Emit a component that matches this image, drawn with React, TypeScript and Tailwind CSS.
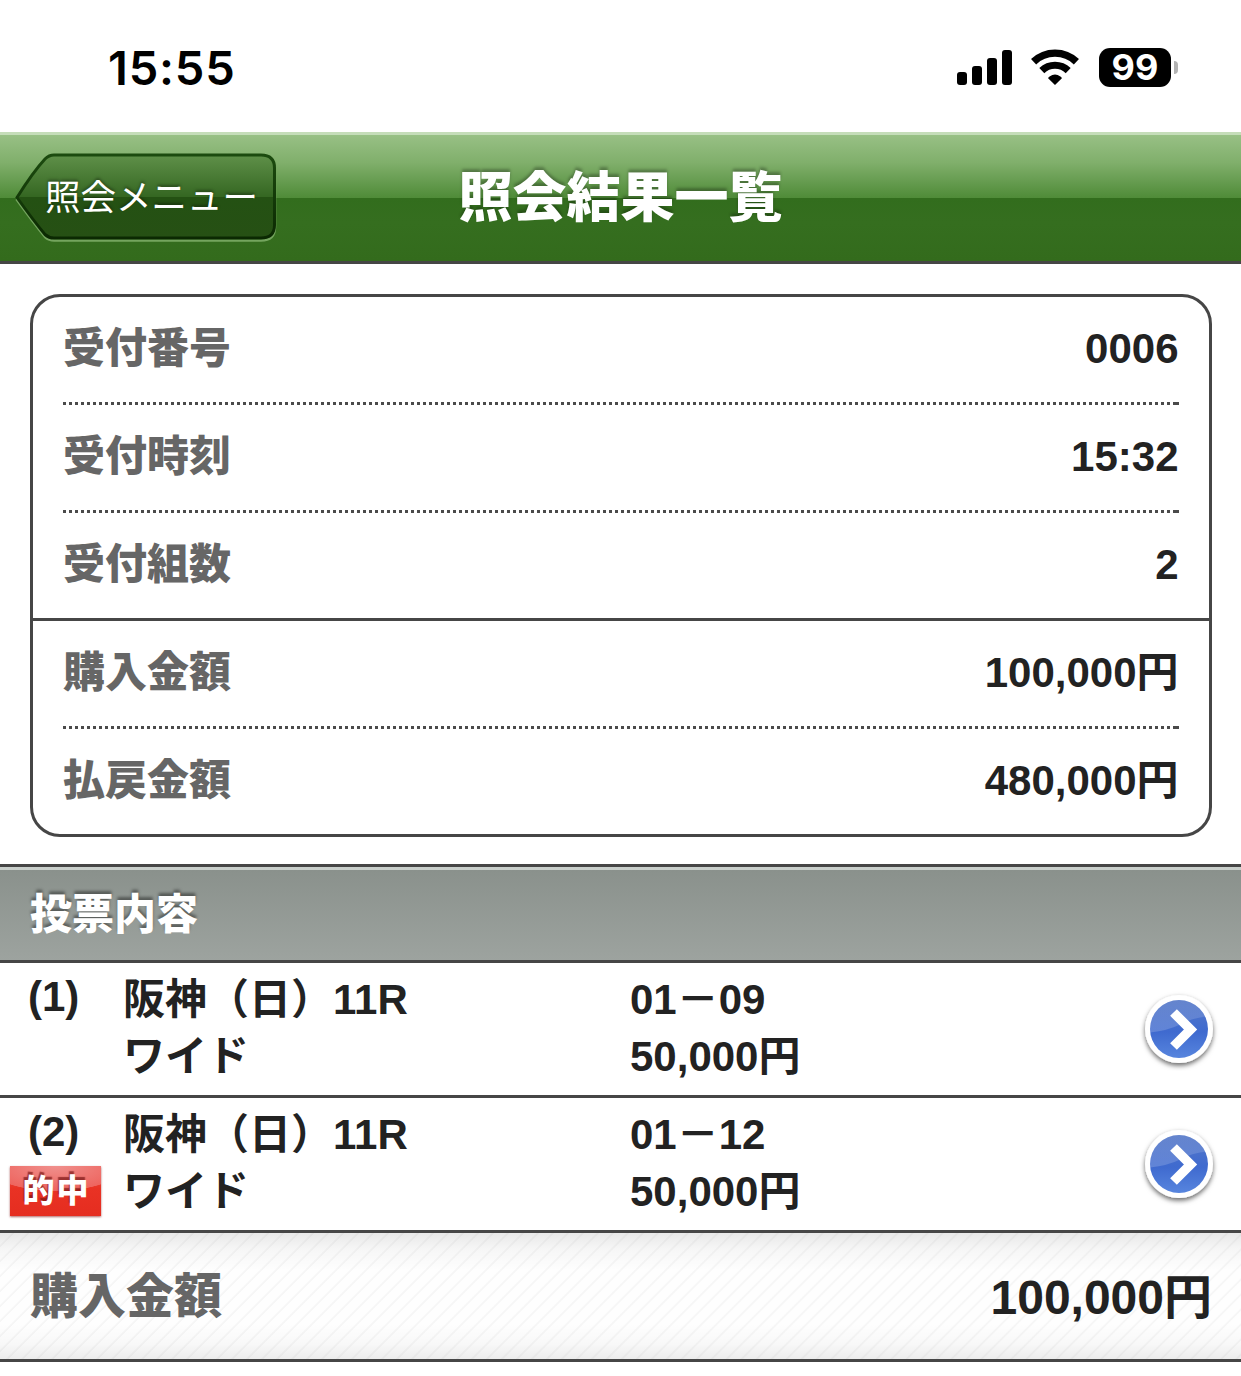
import React from 'react';

interface SummaryItem {
  label: string;
  value: string;
  divider: 'dotted' | 'solid' | 'none';
}

interface Bet {
  no: number;
  race: string;
  type: string;
  numbers: string;
  amount: string;
  hit: boolean;
}

const SUMMARY: SummaryItem[] = [
  { label: '受付番号', value: '0006', divider: 'dotted' },
  { label: '受付時刻', value: '15:32', divider: 'dotted' },
  { label: '受付組数', value: '2', divider: 'solid' },
  { label: '購入金額', value: '100,000円', divider: 'dotted' },
  { label: '払戻金額', value: '480,000円', divider: 'none' },
];

const BETS: Bet[] = [
  { no: 1, race: '阪神（日）11R', type: 'ワイド', numbers: '01－09', amount: '50,000円', hit: false },
  { no: 2, race: '阪神（日）11R', type: 'ワイド', numbers: '01－12', amount: '50,000円', hit: true },
];

const SignalIcon = () => (
  <svg className="w-[56px] h-[36px]" viewBox="0 0 56 36" fill="#000">
    <rect x="0" y="22" width="10" height="13" rx="3" />
    <rect x="15" y="16" width="10" height="19" rx="3" />
    <rect x="30" y="8" width="10" height="27" rx="3" />
    <rect x="45" y="0" width="10" height="35" rx="3" />
  </svg>
);

const WifiIcon = () => (
  <svg className="w-[48px] h-[36px]" viewBox="0 0 48 36" fill="none" stroke="#000">
    <path d="M2.6 12.7A31 31 0 0 1 45.4 12.7" strokeWidth="7.4" />
    <path d="M10.8 21.6A19 19 0 0 1 37.2 21.6" strokeWidth="7.2" />
    <path d="M24 36L17.1 29.2Q17.4 28.2 18.6 27.4Q24 23.8 29.4 27.4Q30.6 28.2 30.9 29.2Z" fill="#000" stroke="none" />
  </svg>
);

const StatusBar = () => (
  <div className="flex h-[132px] items-start justify-between pl-[108px] pr-[63px]">
    <span className="mt-[40px] font-['Inter'] text-[47px] leading-[56px] font-semibold tracking-[0.8px] text-black">15:55</span>
    <div className="mt-[48px] flex items-start">
      <span className="mt-[2px]"><SignalIcon /></span>
      <span className="mt-px ml-[18px]"><WifiIcon /></span>
      <div className="ml-[20px] flex h-[39px] w-[72px] items-center justify-center rounded-[11px] bg-black font-['Inter'] text-[36px] leading-none font-bold text-white">
        <span className="-mt-[2px]">99</span>
      </div>
      <div className="mt-[13px] ml-[3px] h-[13px] w-[4px] rounded-r-full bg-[#b3b3b3]" />
    </div>
  </div>
);

// Left-pointing back button, drawn behind its label
const BackButton = () => (
  <button type="button" className="relative ml-[15px] h-[92px] w-[262px] text-left">
    <svg className="absolute inset-0" width="262" height="92" viewBox="0 0 262 92" fill="none">
      <defs>
        <linearGradient id="backFill" x1="0" y1="0" x2="0" y2="1">
          <stop offset="0" stopColor="#5f9049" />
          <stop offset="0.5" stopColor="#356722" />
          <stop offset="0.51" stopColor="#245113" />
          <stop offset="1" stopColor="#265014" />
        </linearGradient>
        <linearGradient id="backStroke" x1="0" y1="0" x2="0" y2="1">
          <stop offset="0" stopColor="#1c4b0f" />
          <stop offset="1" stopColor="#0b2902" />
        </linearGradient>
      </defs>
      <path d="M2 48Q18 21 30 8Q34 4 39 4H246Q260 4 260 17V75Q260 88.5 246 88.5H39Q34 88.5 30 85Q18 70 2 48Z" stroke="#74a55e" strokeWidth="2.5" />
      <path d="M2 45.5Q18 20 30 7Q34 3 39 3H246Q259.5 3 259.5 16V73Q259.5 86 246 86H39Q34 86 30 82.5Q18 68 2 45.5Z" fill="url(#backFill)" stroke="url(#backStroke)" strokeWidth="3" />
    </svg>
    <span className="relative -mt-[7px] ml-[30px] block text-[35.5px] leading-[52px] font-normal whitespace-nowrap text-white [font-family:'Noto_Sans_CJK_JP',sans-serif] [text-shadow:0_-2px_3px_rgba(0,0,0,0.35)]">
      照会メニュー
    </span>
  </button>
);

const Header = () => (
  <header className="grid h-[132px] grid-cols-[300px_1fr_300px] items-center border-t-[3px] border-b-[3px] border-t-[#c5ddb9] border-b-[#454645] bg-[linear-gradient(to_bottom,#98c085_0%,#80af6b_22%,#4f8b38_50%,#326d1d_50%,#356e1f_70%,#336b1c_100%)]">
    <BackButton />
    <h1 className="-mt-[1px] text-center text-[54px] leading-[80px] font-black whitespace-nowrap text-white [text-shadow:0_-3px_3px_rgba(0,0,0,0.28)]">
      照会結果一覧
    </h1>
  </header>
);

// 3px square dots on a 6px pitch, closed by a dot at the right end
const DottedLine = () => (
  <div className="h-[3px] border-r-[3px] border-[#4a4a4a] bg-[repeating-linear-gradient(to_right,#4a4a4a_0,#4a4a4a_3px,transparent_3px,transparent_6px)]" />
);

const SummaryRow = ({ item }: { item: SummaryItem }) => (
  <div className={item.divider === 'solid' ? 'border-b-[3px] border-[#464646]' : ''}>
    <div className="mx-[30px]">
      <div className="flex h-[105px] items-center justify-between text-[42px] leading-[60px]">
        <span className="-mt-[2px] font-black text-[#666]">{item.label}</span>
        <span className="-mt-[2px] pr-[0.5px] font-bold text-[#222]">{item.value}</span>
      </div>
      {item.divider === 'dotted' && <DottedLine />}
    </div>
  </div>
);

const ArrowIcon = ({ id }: { id: string }) => (
  <svg className="h-[84px] w-[84px]" viewBox="0 0 84 84">
    <defs>
      <linearGradient id={`${id}-base`} x1="0" y1="0" x2="0" y2="1">
        <stop offset="0" stopColor="#5578c8" />
        <stop offset="0.55" stopColor="#3f6acf" />
        <stop offset="1" stopColor="#5785de" />
      </linearGradient>
      <linearGradient id={`${id}-gloss`} x1="0" y1="0" x2="0" y2="1">
        <stop offset="0" stopColor="#fff" stopOpacity="0.08" />
        <stop offset="1" stopColor="#fff" stopOpacity="0.18" />
      </linearGradient>
      <clipPath id={`${id}-clip`}>
        <circle cx="42" cy="42" r="29" />
      </clipPath>
      <filter id={`${id}-shadow`} x="-20%" y="-20%" width="140%" height="150%">
        <feDropShadow dx="0" dy="2.5" stdDeviation="2.6" floodColor="#000" floodOpacity="0.6" />
      </filter>
    </defs>
    <circle cx="42" cy="42" r="34" fill="#fff" filter={`url(#${id}-shadow)`} />
    <circle cx="42" cy="42" r="29" fill={`url(#${id}-base)`} />
    <path d="M8 46Q30 44 42 38Q56 30 76 29V8H8Z" fill={`url(#${id}-gloss)`} clipPath={`url(#${id}-clip)`} />
    <path d="M36.5 25.5L53.5 42.5L36.5 59.5" fill="none" stroke="#fff" strokeWidth="9.5" />
  </svg>
);

const HitBadge = () => (
  <div className="ml-[10px] flex h-[50px] w-[91px] items-center justify-center bg-[radial-gradient(ellipse_75%_50%_at_50%_0%,#f0908d_0%,#ee655f_98%,transparent_100%),linear-gradient(to_bottom,#ec5a52,#e93224_45%,#e52d20)] pl-[2px] text-[32px] leading-[44px] tracking-[2px] text-white shadow-[0_1px_2px_rgba(120,0,0,0.6)] [text-shadow:-1px_-3px_1px_rgba(120,20,20,0.7)]">
    的中
  </div>
);

const BetRow = ({ bet }: { bet: Bet }) => (
  <div className="grid h-[135px] grid-cols-[123px_507px_1fr_104px] border-b-[3px] border-[#464646] text-[42px] leading-[57px] font-bold text-[#222]">
    <div className="pt-[5px]">
      <div className="pl-[28px]">({bet.no})</div>
      {bet.hit && <div className="pt-[6px] font-black"><HitBadge /></div>}
    </div>
    <div className="pt-[8px]">
      <div>{bet.race}</div>
      <div>{bet.type}</div>
    </div>
    <div className="pt-[8px]">
      <div>{bet.numbers}</div>
      <div>{bet.amount}</div>
    </div>
    <div className="flex items-center">
      <ArrowIcon id={`arrow${bet.no}`} />
    </div>
  </div>
);

const App: React.FC = () => {
  return (
    <div className="h-[1376px] w-[1241px] overflow-hidden bg-white [font-family:'Liberation_Sans','Noto_Sans_CJK_JP',sans-serif]">
      <StatusBar />
      <Header />

      <section className="mt-[30px] mr-[29px] ml-[30px] h-[543px] rounded-[30px] border-[3px] border-[#464646]">
        {SUMMARY.map((item) => (
          <SummaryRow key={item.label} item={item} />
        ))}
      </section>

      <div className="mt-[27px] border-y-[3px] border-[#464646]">
        <h2 className="h-[93px] border-t-[3px] border-[#c9cfcb] bg-[linear-gradient(to_bottom,#8a918c,#9da39f)] pt-[15px] pl-[30px] text-[42px] leading-[60px] font-black text-white [text-shadow:0_-3px_3px_rgba(0,0,0,0.4)]">
          投票内容
        </h2>
      </div>

      {BETS.map((bet) => (
        <BetRow key={bet.no} bet={bet} />
      ))}

      <div className="flex h-[129px] items-center justify-between border-b-[3px] border-[#464646] bg-[linear-gradient(to_bottom,rgba(0,0,0,0.085),rgba(0,0,0,0.03)_13%,transparent_30%,transparent_72%,rgba(0,0,0,0.025)_88%,rgba(0,0,0,0.07)),repeating-linear-gradient(135deg,#fefefe_0,#fefefe_8px,#f6f6f6_9px,#f6f6f6_10px,#fefefe_10.6px)] pr-[29px] pl-[30px] text-[48px] leading-[70px]">
        <span className="mt-[2px] font-black text-[#666]">購入金額</span>
        <span className="mt-[4px] font-bold text-[#222]">100,000円</span>
      </div>
    </div>
  );
};

export default App;
